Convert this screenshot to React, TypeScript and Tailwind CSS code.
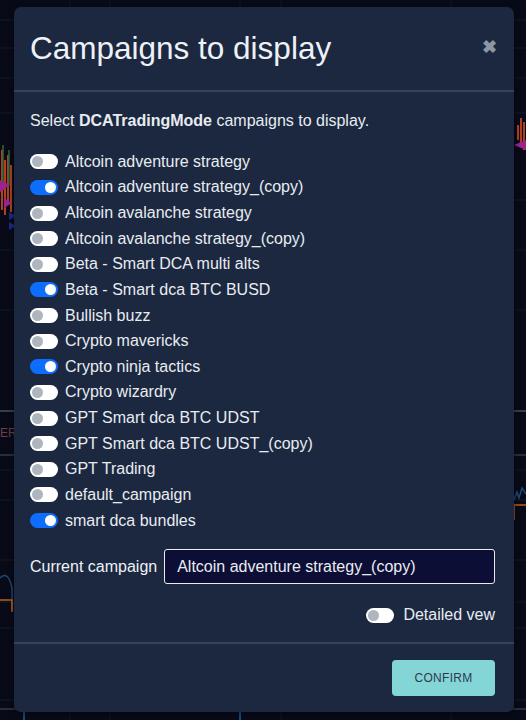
import { useState } from 'react';

const campaigns = [
  { name: 'Altcoin adventure strategy', on: false },
  { name: 'Altcoin adventure strategy_(copy)', on: true },
  { name: 'Altcoin avalanche strategy', on: false },
  { name: 'Altcoin avalanche strategy_(copy)', on: false },
  { name: 'Beta - Smart DCA multi alts', on: false },
  { name: 'Beta - Smart dca BTC BUSD', on: true },
  { name: 'Bullish buzz', on: false },
  { name: 'Crypto mavericks', on: false },
  { name: 'Crypto ninja tactics', on: true },
  { name: 'Crypto wizardry', on: false },
  { name: 'GPT Smart dca BTC UDST', on: false },
  { name: 'GPT Smart dca BTC UDST_(copy)', on: false },
  { name: 'GPT Trading', on: false },
  { name: 'default_campaign', on: false },
  { name: 'smart dca bundles', on: true },
];

function Switch({ on, onClick }: { on: boolean; onClick?: () => void }) {
  return (
    <button
      onClick={onClick}
      aria-pressed={on ? 'true' : 'false'}
      className={`w-[28px] h-[15px] rounded-full flex items-center shrink-0 ${on ? 'bg-[#0d6efd] justify-end' : 'bg-white justify-start'}`}
    >
      <span className={`block w-[11px] h-[11px] rounded-full mx-[2px] ${on ? 'bg-white' : 'bg-[#adb5bd]'}`} />
    </button>
  );
}

function ChartBackdrop() {
  return (
    <svg className="absolute inset-0 w-full h-full" viewBox="0 0 526 720" preserveAspectRatio="none">
      {[20, 48, 78, 113, 200, 250, 310, 470, 500, 560, 602, 628, 700].map(y => (
        <line key={y} x1="0" x2="526" y1={y} y2={y} stroke="#151827" strokeWidth="1" />
      ))}
      {[70, 110, 240, 281, 451].map(x => (
        <line key={x} x1={x} x2={x} y1="0" y2="720" stroke="#121525" strokeWidth="1" />
      ))}
      <line x1="0" x2="526" y1="411" y2="411" stroke="#6b7180" strokeWidth="1" />
      <line x1="0" x2="526" y1="455" y2="455" stroke="#4a5060" strokeWidth="1" />
      <line x1="0" x2="526" y1="709" y2="709" stroke="#4a5060" strokeWidth="1" />
      <text x="0" y="437" fill="#6d4040" fontSize="12" fontFamily="Liberation Sans, Arial, sans-serif">ERR</text>
      <path d="M2 150 L2 210 M5 160 L5 215 M8 155 L8 205 M11 165 L11 212" stroke="#b0401f" strokeWidth="2" />
      <path d="M3 145 L3 190 M9 150 L9 185" stroke="#2f6a3a" strokeWidth="1.5" />
      <path d="M0 180 L10 185 L0 192 Z M4 198 L12 203 L4 208 Z" fill="#9a2390" />
      <path d="M9 212 L16 216 L9 220 Z M9 222 L16 226 L9 230 Z" fill="#1c2a8a" />
      <path d="M518 125 L518 140 M521 118 L521 145 M524 122 L524 150" stroke="#b0401f" strokeWidth="2" />
      <path d="M514 145 L526 140 L526 150 Z" fill="#9a2390" />
      <path d="M0 578 Q8 570 12 588 L12 610" stroke="#1a4a78" strokeWidth="1.5" fill="none" />
      <path d="M0 600 L12 600 L12 612" stroke="#c06010" strokeWidth="1.5" fill="none" />
      <path d="M514 500 L517 492 L519 498 L522 488 L526 494" stroke="#1a4a78" strokeWidth="1.5" fill="none" />
      <path d="M514 520 L514 505 L526 505" stroke="#c06010" strokeWidth="1.5" fill="none" />
      <line x1="24" x2="24" y1="712" y2="720" stroke="#1a4a78" strokeWidth="2" />
      <line x1="240" x2="240" y1="712" y2="720" stroke="#1a4a78" strokeWidth="2" />
    </svg>
  );
}

export default function App() {
  const [items, setItems] = useState(campaigns);
  const [detailed, setDetailed] = useState(false);

  return (
    <div className="relative w-[526px] h-[720px] bg-[#080a18] overflow-hidden" style={{ fontFamily: '"Liberation Sans", Arial, sans-serif' }}>
      <ChartBackdrop />
      <div className="relative pt-[7px] pl-[14px]">
        <div className="bg-[#1b2840] rounded-[7px] w-[500px] h-[705px] flex flex-col text-[#e8ecf1] shadow-[0_2px_6px_rgba(0,0,0,0.5)]">
          <div className="h-[85px] flex items-center justify-between pl-[16px] pr-[17px] border-b-2 border-[#34445a]">
            <h2 className="text-[31.5px] leading-none text-[#eef1f5] mt-[1px]">Campaigns to display</h2>
            <span className="text-[#8c95a2] text-[18px] font-bold leading-none mt-[-4px]">&#10006;</span>
          </div>
          <div className="pl-[16px] pr-[19px] pt-[20px] flex-1">
            <p className="text-[16px] leading-[18px] mb-[19px]">Select <b>DCATradingMode</b> campaigns to display.</p>
            <div className="flex flex-col">
              {items.map((c, i) => (
                <div key={c.name} className="h-[25.64px] flex items-center gap-[7px]">
                  <Switch on={c.on} onClick={() => setItems(items.map((x, j) => (j === i ? { ...x, on: !x.on } : x)))} />
                  <span className="text-[16px] leading-none">{c.name}</span>
                </div>
              ))}
            </div>
            <div className="flex items-center mt-[16px] gap-[7px]">
              <span className="text-[16px] text-[#eef1f5]">Current campaign</span>
              <div className="flex-1 h-[35px] bg-[#0d0e35] border border-[#e8ecf1] rounded-[3px] flex items-center px-[12px] text-[16px]">
                Altcoin adventure strategy_(copy)
              </div>
            </div>
            <div className="flex justify-end items-center gap-[9px] mt-[19px]">
              <Switch on={detailed} onClick={() => setDetailed(!detailed)} />
              <span className="text-[16px]">Detailed vew</span>
            </div>
          </div>
          <div className="border-t-2 border-[#34445a] h-[70px] flex items-start justify-end pl-[16px] pr-[19px] pt-[16px]">
            <button className="w-[103px] h-[36px] bg-[#84d6d6] rounded-[4px] text-[12px] text-[#2d3a4e] tracking-wide">CONFIRM</button>
          </div>
        </div>
      </div>
    </div>
  );
}
